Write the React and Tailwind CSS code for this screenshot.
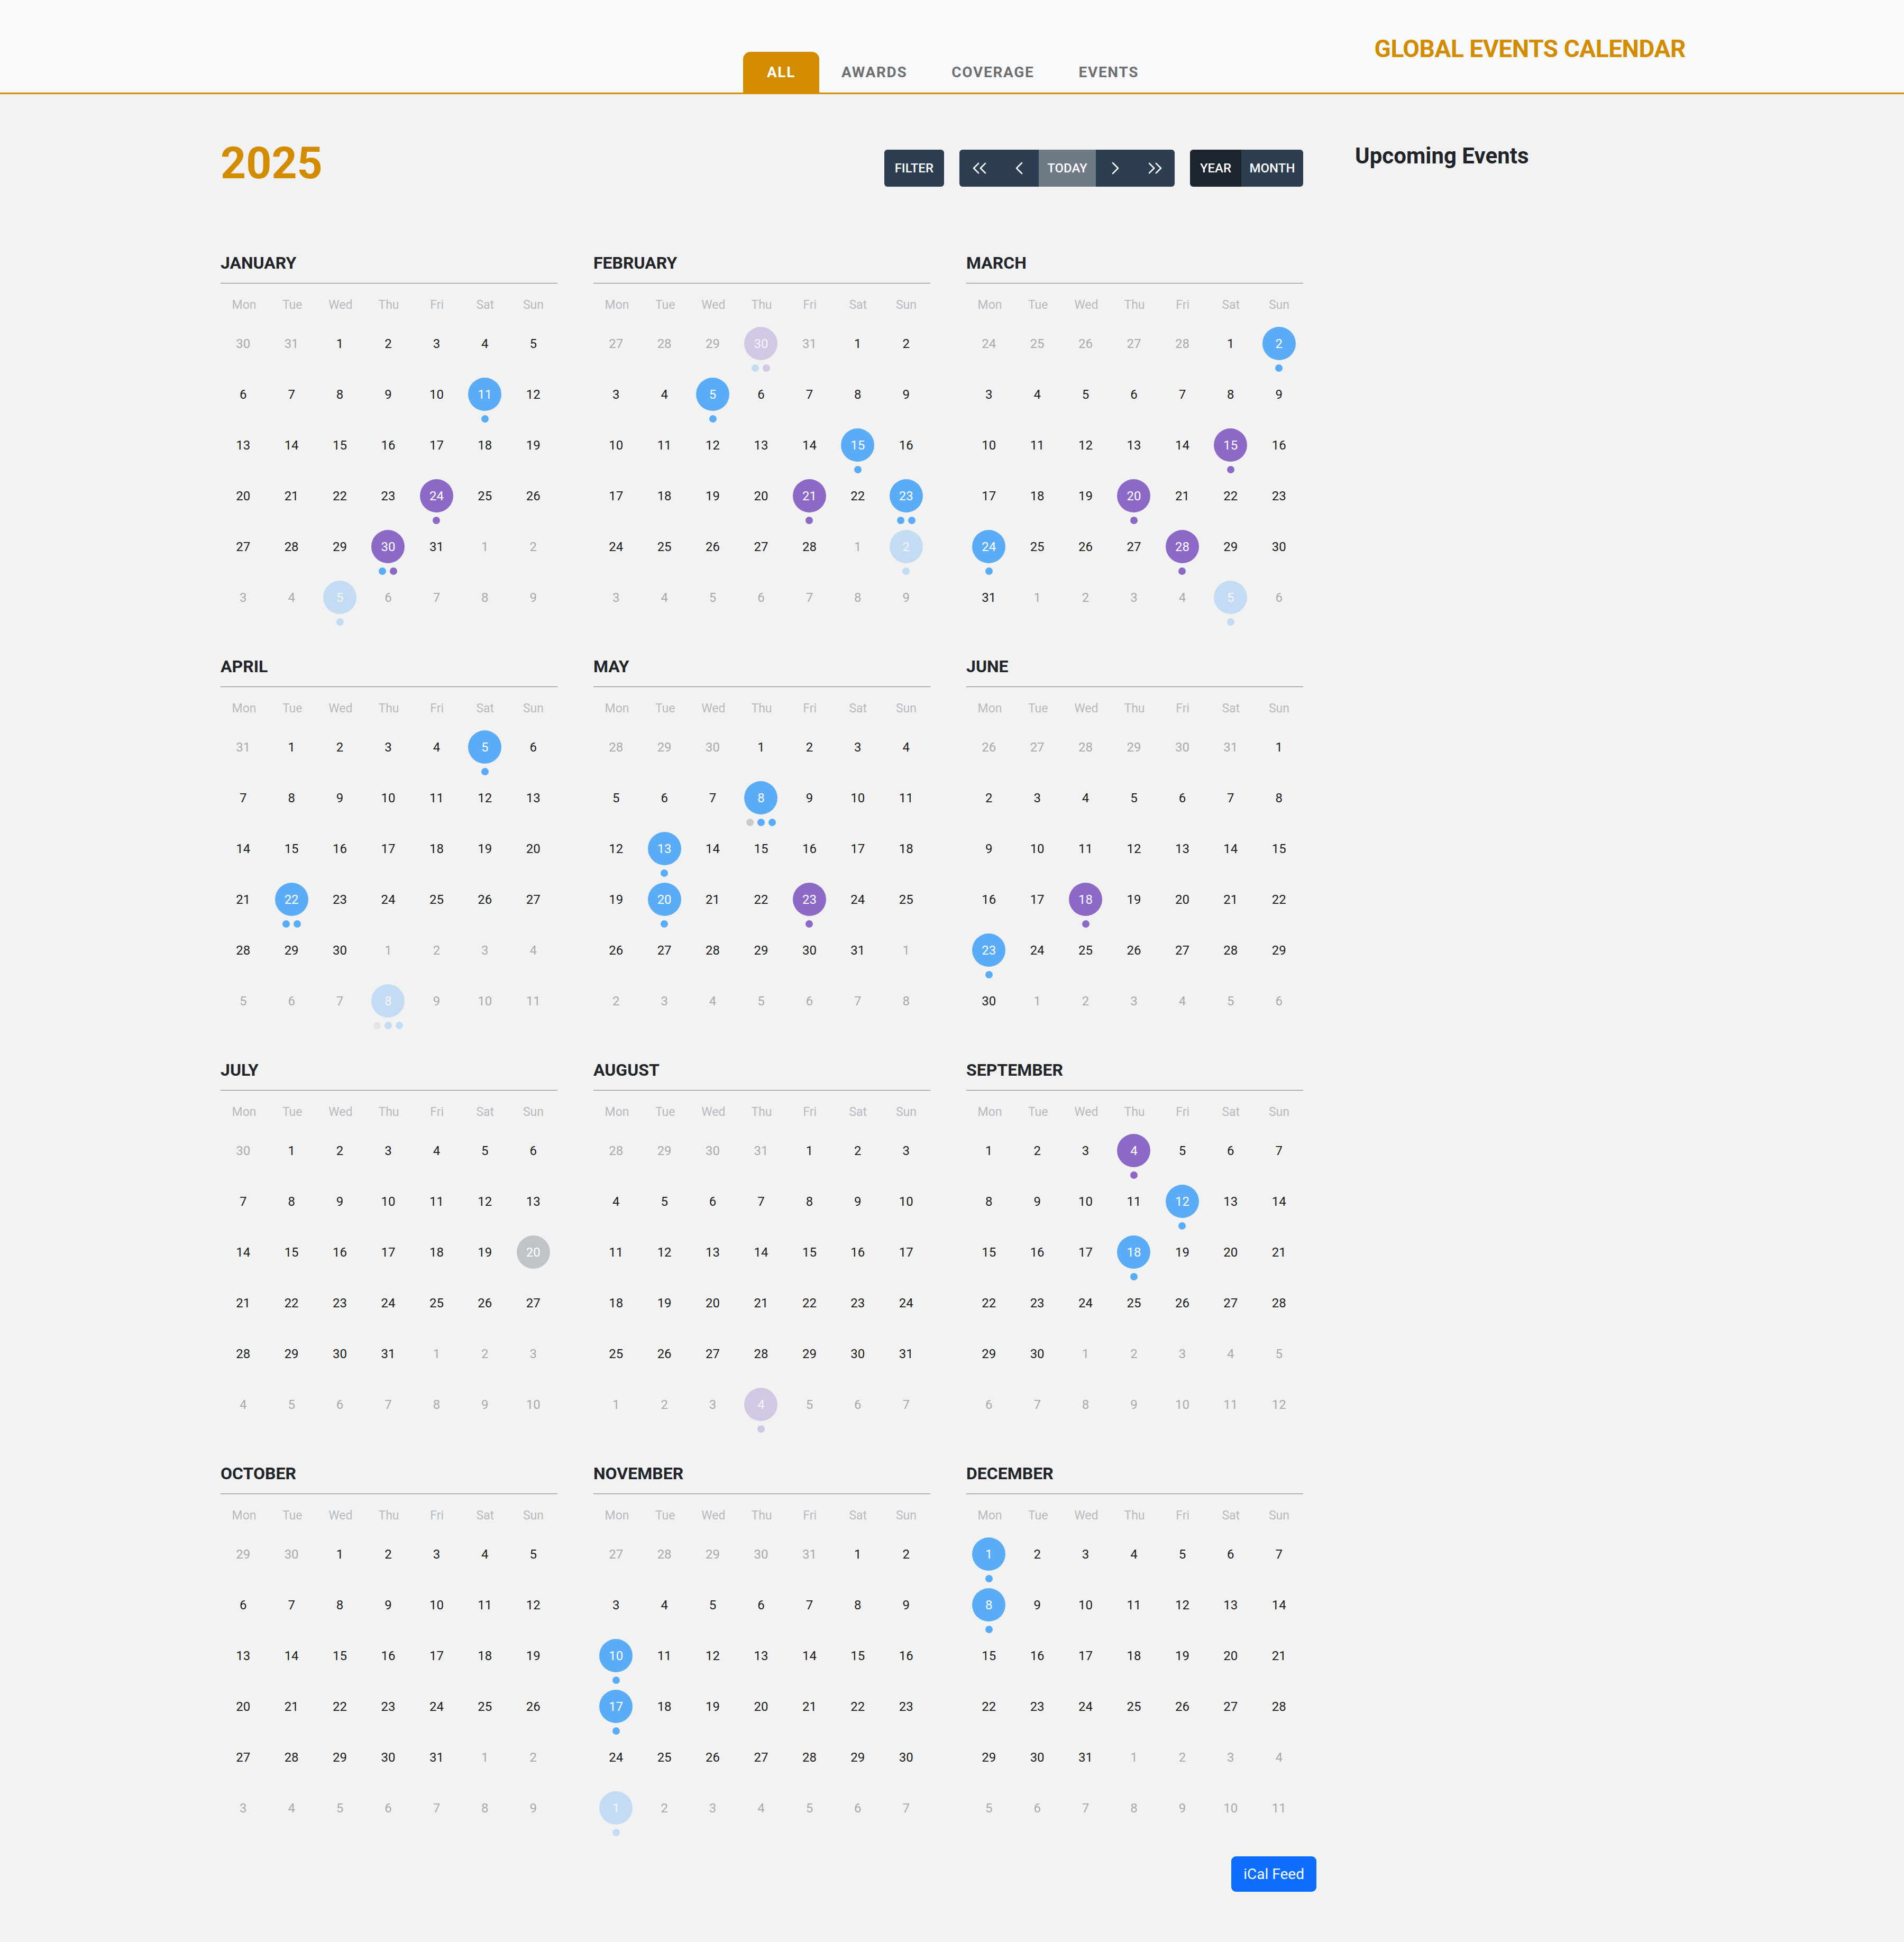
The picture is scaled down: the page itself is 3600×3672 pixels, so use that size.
import React from 'react';
import { ChevronsLeft, ChevronLeft, ChevronRight, ChevronsRight } from 'lucide-react';

const MONTHS = ['January', 'February', 'March', 'April', 'May', 'June', 'July', 'August', 'September', 'October', 'November', 'December'];
const WEEKDAYS = ['Mon', 'Tue', 'Wed', 'Thu', 'Fri', 'Sat', 'Sun'];

const COLORS = {
    B: 'bg-[#5aacf6]',
    P: 'bg-[#8c69c6]',
    G: 'bg-[#c9c9c9]',
    T: 'bg-[#c0c4c8]',
};

// date -> circle colour and the dots under it
const EVENTS = {
    '2025-1-11': ['B', ['B']],
    '2025-1-24': ['P', ['P']],
    '2025-1-30': ['P', ['B', 'P']],
    '2025-2-5': ['B', ['B']],
    '2025-2-15': ['B', ['B']],
    '2025-2-21': ['P', ['P']],
    '2025-2-23': ['B', ['B', 'B']],
    '2025-3-2': ['B', ['B']],
    '2025-3-15': ['P', ['P']],
    '2025-3-20': ['P', ['P']],
    '2025-3-24': ['B', ['B']],
    '2025-3-28': ['P', ['P']],
    '2025-4-5': ['B', ['B']],
    '2025-4-22': ['B', ['B', 'B']],
    '2025-5-8': ['B', ['G', 'B', 'B']],
    '2025-5-13': ['B', ['B']],
    '2025-5-20': ['B', ['B']],
    '2025-5-23': ['P', ['P']],
    '2025-6-18': ['P', ['P']],
    '2025-6-23': ['B', ['B']],
    '2025-7-20': ['T', []],
    '2025-9-4': ['P', ['P']],
    '2025-9-12': ['B', ['B']],
    '2025-9-18': ['B', ['B']],
    '2025-11-10': ['B', ['B']],
    '2025-11-17': ['B', ['B']],
    '2025-12-1': ['B', ['B']],
    '2025-12-8': ['B', ['B']],
};

const buildDays = (year, month) => {
    const first = new Date(year, month, 1);
    const offset = (first.getDay() + 6) % 7;
    const days = [];
    for (let i = 0; i < 42; i++) {
        const d = new Date(year, month, 1 - offset + i);
        days.push({
            day: d.getDate(),
            key: `${d.getFullYear()}-${d.getMonth() + 1}-${d.getDate()}`,
            current: d.getMonth() === month,
        });
    }
    return days;
};

const DayCell = ({ day }) => {
    const event = EVENTS[day.key];
    if (!event) {
        return (
            <div className="h-[96px] flex flex-col items-center">
                <div className={`w-[63px] h-[63px] flex items-center justify-center text-[24px] leading-none ${day.current ? 'text-[#1c1c1c]' : 'text-[#a9a9a9]'}`}>
                    {day.day}
                </div>
            </div>
        );
    }
    const [color, dots] = event;
    return (
        <div className={`h-[96px] flex flex-col items-center ${day.current ? '' : 'opacity-30'}`}>
            <div className={`w-[63px] h-[63px] rounded-full flex items-center justify-center text-[24px] leading-none text-white ${COLORS[color]}`}>
                {day.day}
            </div>
            {dots.length > 0 && (
                <div className="mt-[8px] flex gap-[7px]">
                    {dots.map((c, i) => (
                        <span key={i} className={`w-[14px] h-[14px] rounded-full ${COLORS[c]}`}></span>
                    ))}
                </div>
            )}
        </div>
    );
};

const Month = ({ year, month }) => {
    const days = buildDays(year, month);
    return (
        <div>
            <div className="border-b border-[#777] pb-[22px] text-[32px] font-bold leading-none uppercase text-[#212529]">
                {MONTHS[month]}
            </div>
            <div className="mt-[24px] -ml-[1px] h-[34px] grid grid-cols-7 items-center text-center text-[23px] text-[#b6babf]">
                {WEEKDAYS.map((w) => (
                    <span key={w}>{w}</span>
                ))}
            </div>
            <div className="mt-[24px] -ml-[3px] grid grid-cols-7">
                {days.map((d, i) => (
                    <DayCell key={i} day={d} />
                ))}
            </div>
        </div>
    );
};

const Tab = ({ label, active }) => (
    <div className={`h-[77px] flex items-center text-[28px] font-bold tracking-[0.06em] ${active ? 'px-[45px] bg-[#d38b00] text-white rounded-t-[14px]' : 'px-[42px] text-[#6f6f6f]'}`}>
        {label}
    </div>
);

const App = () => {
    return (
        <div className="min-h-[3672px] bg-[#f2f2f2] font-['Roboto','Noto_Sans',sans-serif]">
            <header className="h-[178px] bg-[#f8f9fa] border-b-[3px] border-[#d38b00]">
                <div className="mx-auto w-[2774px] h-full grid grid-cols-[1fr_auto_1fr]">
                    <div></div>
                    <nav className="self-end flex">
                        <Tab label="ALL" active />
                        <Tab label="AWARDS" />
                        <Tab label="COVERAGE" />
                        <Tab label="EVENTS" />
                    </nav>
                    <h1 className="justify-self-end pt-[69px] text-[46px] font-bold leading-none tracking-[-0.01em] text-[#d38b00]">
                        GLOBAL EVENTS CALENDAR
                    </h1>
                </div>
            </header>

            <div className="mx-auto w-[2774px] flex pl-[4px]">
                <main className="w-[2072px]">
                    <div className="w-[2047px] pt-[89px] flex items-start justify-between">
                        <h2 className="text-[84px] font-bold leading-none text-[#d38b00]">2025</h2>
                        <div className="mt-[16px] flex gap-[29px] text-[24px] font-medium text-white">
                            <button className="h-[70px] px-[20px] rounded-[6px] bg-[#2d3e50]">FILTER</button>
                            <div className="h-[70px] flex rounded-[6px] overflow-hidden bg-[#2d3e50]">
                                <button className="w-[75px] flex items-center justify-center"><ChevronsLeft size={44} strokeWidth={1.4} /></button>
                                <button className="w-[75px] flex items-center justify-center"><ChevronLeft size={40} strokeWidth={1.5} /></button>
                                <button className="w-[108px] bg-[#6f7a87]">TODAY</button>
                                <button className="w-[74px] flex items-center justify-center"><ChevronRight size={40} strokeWidth={1.5} /></button>
                                <button className="w-[75px] flex items-center justify-center"><ChevronsRight size={44} strokeWidth={1.4} /></button>
                            </div>
                            <div className="h-[70px] flex rounded-[6px] overflow-hidden">
                                <button className="w-[97px] bg-[#1c252e]">YEAR</button>
                                <button className="w-[117px] bg-[#2d3e50]">MONTH</button>
                            </div>
                        </div>
                    </div>

                    <div className="mt-[128px] w-[2047px] grid grid-cols-3 gap-x-[68px] gap-y-[50px]">
                        {MONTHS.map((m, i) => (
                            <Month key={m} year={2025} month={i} />
                        ))}
                    </div>

                    <div className="mt-[27px] flex justify-end">
                        <button className="h-[67px] px-[23px] rounded-[9px] bg-[#0d6efd] text-[28px] text-white">iCal Feed</button>
                    </div>
                </main>

                <aside className="ml-[73px] pt-[96px]">
                    <h3 className="text-[42px] font-bold leading-none text-[#212529]">Upcoming Events</h3>
                </aside>
            </div>
        </div>
    );
};

export default App;
